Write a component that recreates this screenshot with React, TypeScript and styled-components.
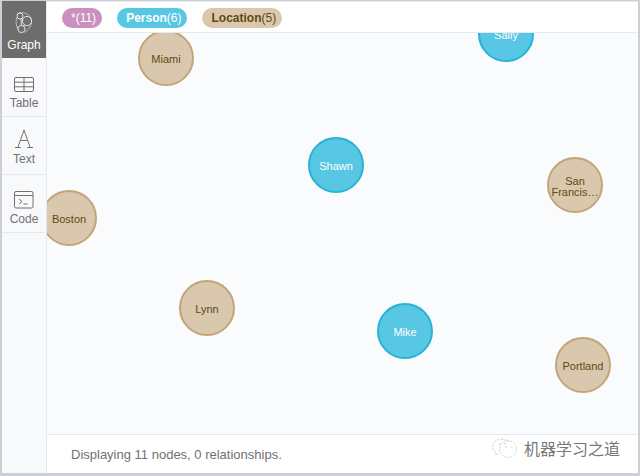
import React from "react";
import styled, { createGlobalStyle } from "styled-components";

const GlobalStyle = createGlobalStyle`
  html, body {
    margin: 0;
    padding: 0;
    background: #cfd0d8;
  }
  body {
    font-family: "Liberation Sans", Arial, sans-serif;
  }
`;

const Frame = styled.div`
  position: relative;
  width: 640px;
  height: 476px;
  box-sizing: border-box;
  padding: 1px 2px 3px 2px;
  background: #cdced6;
  display: flex;
  overflow: hidden;
`;

const Sidebar = styled.nav`
  width: 45px;
  flex-shrink: 0;
  background: #f8f9fb;
  border-right: 1px solid #e6e9ef;
  box-sizing: border-box;
  display: flex;
  flex-direction: column;
`;

const NavItem = styled.div<{ $active?: boolean; $height: number; $bottom?: number }>`
  height: ${(p) => p.$height}px;
  box-sizing: border-box;
  display: flex;
  flex-direction: column;
  align-items: center;
  justify-content: flex-end;
  padding-bottom: ${(p) => p.$bottom ?? 6}px;
  gap: 3px;
  font-size: 12px;
  line-height: 14px;
  color: ${(p) => (p.$active ? "#ffffff" : "#717172")};
  background: ${(p) => (p.$active ? "#6d6d6d" : "transparent")};
  border-bottom: ${(p) => (p.$active ? "0" : "1px solid #e6e9ef")};
`;

const Main = styled.div`
  flex: 1;
  min-width: 0;
  display: flex;
  flex-direction: column;
  background: #fff;
`;

const Legend = styled.header`
  position: relative;
  z-index: 2;
  height: 32px;
  box-sizing: border-box;
  padding: 6px 0 0 15px;
  display: flex;
  align-items: flex-start;
  gap: 15px;
  background: #fff;
  border-bottom: 1px solid #e6e9ef;
  border-top: 1px solid #e6e9ef;
`;

const Pill = styled.span<{ $bg: string; $fg: string }>`
  height: 20px;
  padding: 0 6px 0 9px;
  border-radius: 10px;
  background: ${(p) => p.$bg};
  color: ${(p) => p.$fg};
  font-size: 12px;
  line-height: 20px;
  white-space: nowrap;

  b {
    font-weight: 700;
  }
`;

const Canvas = styled.div`
  position: relative;
  flex: 1;
  background: #f9fbfd;
  overflow: hidden;
`;

const Node = styled.div<{ $kind: "person" | "location"; $x: number; $y: number }>`
  position: absolute;
  left: ${(p) => p.$x - 28}px;
  top: ${(p) => p.$y - 28}px;
  width: 56px;
  height: 56px;
  box-sizing: border-box;
  padding-top: 3px;
  border-radius: 50%;
  border: 2px solid ${(p) => (p.$kind === "person" ? "#28b2d8" : "#c2a578")};
  background: ${(p) => (p.$kind === "person" ? "#57c7e3" : "#d9c8ae")};
  color: ${(p) => (p.$kind === "person" ? "#ffffff" : "#604a0e")};
  font-size: 11px;
  line-height: 11px;
  text-align: center;
  display: flex;
  align-items: center;
  justify-content: center;
`;

const Footer = styled.footer`
  height: 39px;
  box-sizing: border-box;
  padding: 11px 0 0 24px;
  background: #fff;
  border-top: 1px solid #e6e9ef;
  color: #717172;
  font-size: 13px;
  line-height: 17px;
`;

const Watermark = styled.div`
  position: absolute;
  right: 20px;
  bottom: 17px;
  display: flex;
  align-items: center;
  gap: 5px;
  color: #77787a;
  font-family: "Noto Sans CJK SC", "Liberation Sans", sans-serif;
  font-size: 16px;
  line-height: 20px;
`;

const GraphIcon = () => (
  <svg width="20" height="24" viewBox="0 0 20 24" fill="none" stroke="#e2e2e2" strokeWidth="1">
    <circle cx="6" cy="5" r="3" />
    <circle cx="13" cy="10" r="4.600" />
    <circle cx="7.500" cy="18" r="3.600" />
    <path d="M3.500 2.500C6 1 11 1.500 14 3.500c3 2 4.500 6 3 10-1 3-3.500 6.500-6.500 8" strokeDasharray="1.500 0.800" />
    <path d="M3 6.500C1.500 10 2 15 4 18.500" strokeDasharray="1.500 0.800" />
    <path d="M7 8l.5 6.500M9 8l-.5 1M10.500 13.500l-1 2" />
  </svg>
);

const TableIcon = () => (
  <svg width="20" height="16" viewBox="0 0 20 16" fill="none" stroke="#6f6f70" strokeWidth="1">
    <rect x="0.5" y="0.5" width="19" height="14" rx="1.500" />
    <path d="M0.500 5.200h19M0.500 9.800h19M10 0.500v14" />
  </svg>
);

const CodeIcon = () => (
  <svg width="20" height="18" viewBox="0 0 20 18" fill="none" stroke="#6f6f70" strokeWidth="1">
    <rect x="0.5" y="0.5" width="18.500" height="16.500" rx="1.500" />
    <path d="M0.500 4.500h18.500" />
    <path d="M5 8l3 2.500-3 2.500M9.500 13h4" />
  </svg>
);

const LetterIcon = () => (
  <svg width="20" height="20" viewBox="0 0 20 20" fill="none" stroke="#737374" strokeWidth="1">
    <path d="M10 1L4 18M10 1l6 17M6.200 11.500h7.600" />
    <path d="M1 18.500h6M13 18.500h6" />
  </svg>
);

const WeChatIcon = () => (
  <svg width="28" height="22" viewBox="0 0 28 22" fill="none" stroke="#c2c3c5" strokeWidth="0.9" strokeDasharray="1.600 1.400">
    <path d="M11 2C5.500 2 1.500 5.500 1.500 9.500c0 2.500 1.500 4.500 3.500 6l-.5 2.500 3-1.500" />
    <path d="M11 2c3 0 6 1.500 7 3.500" />
    <circle cx="17" cy="12" r="8.500" />
    <path d="M8 7h1.500M13 6.500h1.500M14 10h1.500M20 10h1.500" />
  </svg>
);

const nodes: { label: React.ReactNode; kind: "person" | "location"; x: number; y: number }[] = [
  { label: "Miami", kind: "location", x: 119, y: 25 },
  { label: "Sally", kind: "person", x: 459, y: 1 },
  { label: "Shawn", kind: "person", x: 289, y: 132 },
  {
    label: (
      <span>
        San
        <br />
        Francis…
      </span>
    ),
    kind: "location",
    x: 528,
    y: 152,
  },
  { label: "Boston", kind: "location", x: 22, y: 185 },
  { label: "Lynn", kind: "location", x: 160, y: 275 },
  { label: "Mike", kind: "person", x: 358, y: 298 },
  { label: "Portland", kind: "location", x: 536, y: 332 },
];

const App: React.FC = () => {
  return (
    <Frame>
      <GlobalStyle />
      <Sidebar>
        <NavItem $active $height={57}>
          <GraphIcon />
          Graph
        </NavItem>
        <NavItem $height={59}>
          <TableIcon />
          Table
        </NavItem>
        <NavItem $height={58} $bottom={8}>
          <LetterIcon />
          Text
        </NavItem>
        <NavItem $height={58}>
          <CodeIcon />
          Code
        </NavItem>
      </Sidebar>
      <Main>
        <Legend>
          <Pill $bg="#c990c0" $fg="#ffffff">
            *(11)
          </Pill>
          <Pill $bg="#57c7e3" $fg="#ffffff">
            <b>Person</b>(6)
          </Pill>
          <Pill $bg="#d9c8ae" $fg="#604a0e">
            <b>Location</b>(5)
          </Pill>
        </Legend>
        <Canvas>
          {nodes.map((n, i) => (
            <Node key={i} $kind={n.kind} $x={n.x} $y={n.y}>
              {n.label}
            </Node>
          ))}
        </Canvas>
        <Footer>Displaying 11 nodes, 0 relationships.</Footer>
      </Main>
      <Watermark>
        <WeChatIcon />
        机器学习之道
      </Watermark>
    </Frame>
  );
};

export default App;
